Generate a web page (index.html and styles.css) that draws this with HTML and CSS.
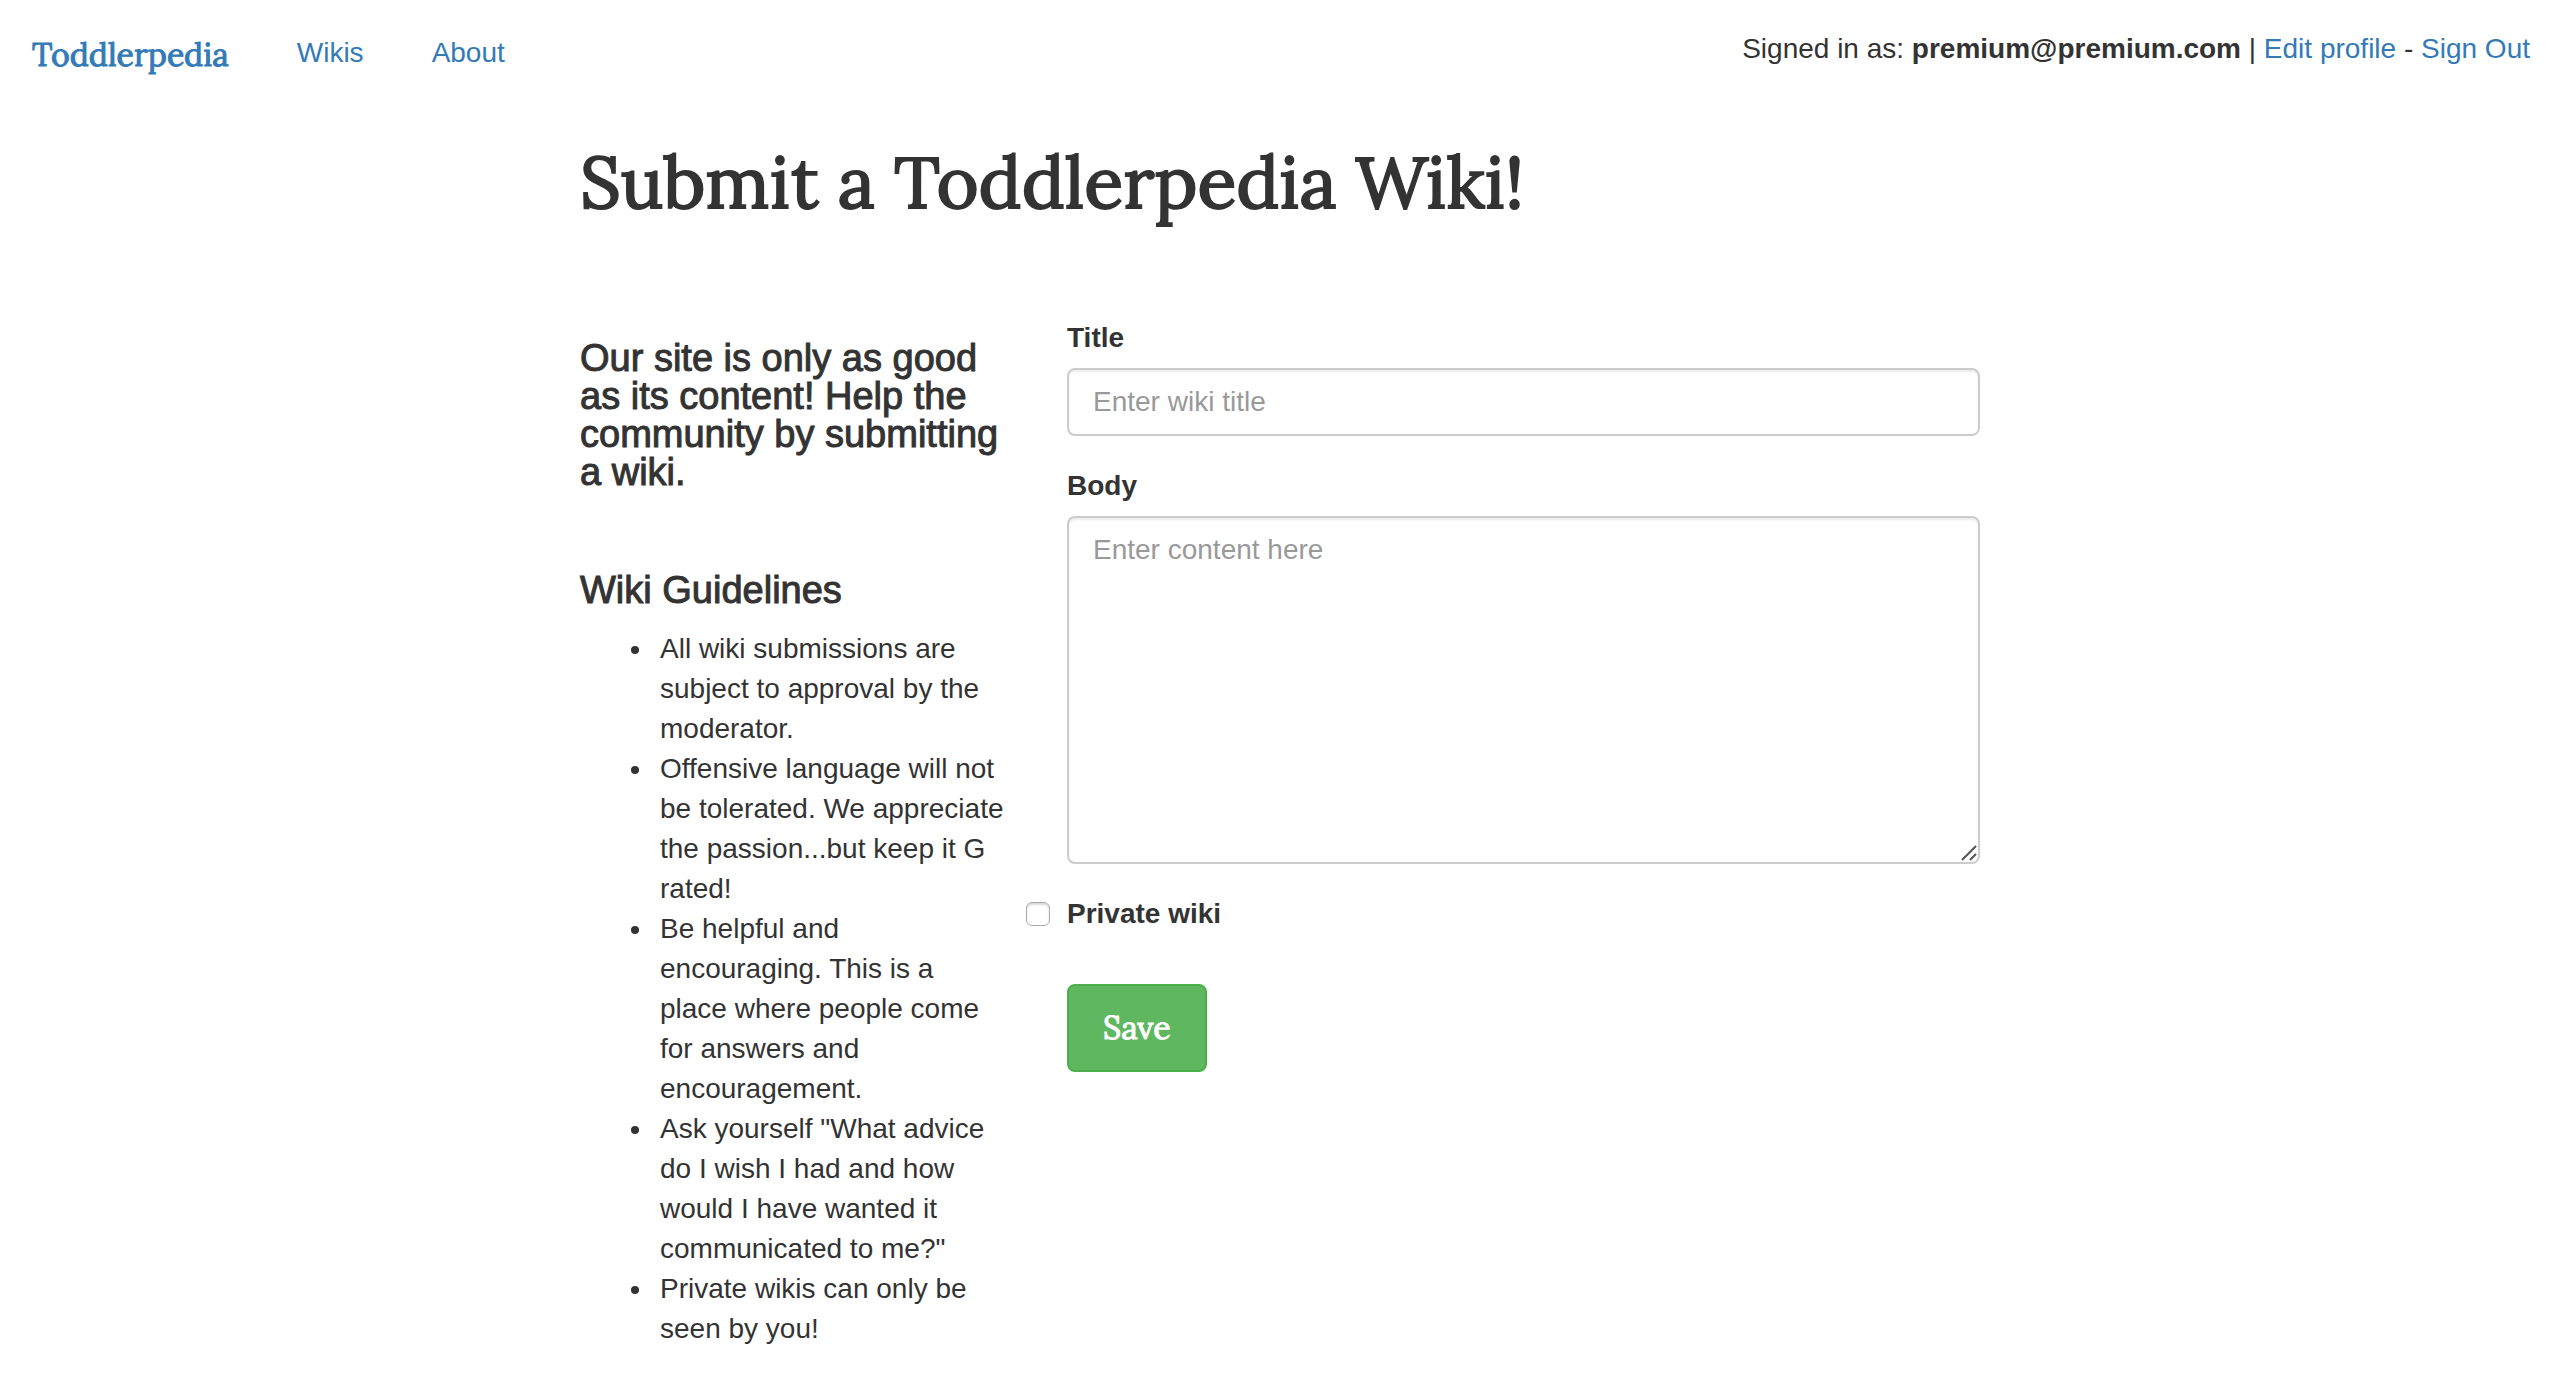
FILE: index.html
```html
<!DOCTYPE html>
<html lang="en">
<head>
  <meta charset="utf-8">
  <title>Toddlerpedia</title>
  <link rel="stylesheet" href="styles.css">
</head>
<body>
  <header class="topbar">
    <nav class="nav">
      <a class="brand" href="#">Toddlerpedia</a>
      <a href="#">Wikis</a>
      <a href="#">About</a>
    </nav>
    <div class="user-info">Signed in as: <strong>premium@premium.com</strong> | <a href="#">Edit profile</a> - <a href="#">Sign Out</a></div>
  </header>

  <main class="container">
    <h1>Submit a Toddlerpedia Wiki!</h1>
    <div class="row">
      <section class="guide">
        <h4 class="intro">Our site is only as good as its content! Help the community by submitting a wiki.</h4>
        <h4>Wiki Guidelines</h4>
        <ul>
          <li>All wiki submissions are subject to approval by the moderator.</li>
          <li>Offensive language will not be tolerated. We appreciate the passion...but keep it G rated!</li>
          <li>Be helpful and encouraging. This is a place where people come for answers and encouragement.</li>
          <li>Ask yourself "What advice do I wish I had and how would I have wanted it communicated to me?"</li>
          <li>Private wikis can only be seen by you!</li>
        </ul>
      </section>
      <form class="wiki-form">
        <div class="form-group">
          <label for="title">Title</label>
          <input class="form-control" type="text" id="title" placeholder="Enter wiki title">
        </div>
        <div class="form-group">
          <label for="body">Body</label>
          <textarea class="form-control" id="body" rows="8" placeholder="Enter content here"></textarea>
        </div>
        <div class="check-group">
          <input type="checkbox" id="private">
          <label for="private">Private wiki</label>
        </div>
        <button class="btn" type="submit">Save</button>
      </form>
    </div>
  </main>
</body>
</html>
```

FILE: styles.css
```css
* {
  box-sizing: border-box;
}

body {
  margin: 0;
  background: #fff;
  color: #333;
  font: 28px/40px "Helvetica Neue", "Liberation Sans", Arial, sans-serif;
}

a {
  color: #337ab7;
  text-decoration: none;
}

.topbar {
  display: flex;
  justify-content: space-between;
  align-items: flex-start;
  padding: 29px 30px 0 32px;
}

.nav {
  display: flex;
  align-items: flex-start;
  gap: 68px;
  line-height: 48px;
}

.brand,
h1,
.btn {
  font-family: Lora, "Liberation Serif", serif;
  font-weight: 400;
  -webkit-text-stroke: 1px;
}

.brand {
  padding-top: 2px;
  font-size: 32px;
}

.container {
  max-width: 1460px;
  margin: 0 auto;
  padding: 0 30px;
}

h1 {
  margin: 59px 0 92px;
  font-size: 72px;
  line-height: 88px;
  -webkit-text-stroke: 2px;
}

.row {
  display: grid;
  grid-template-columns: 427fr 913fr;
  gap: 60px;
}

h4 {
  margin: 0 0 20px;
  font-size: 38px;
  font-weight: 400;
  line-height: 38px;
  -webkit-text-stroke: 1px;
}

.guide {
  padding-top: 21px;
}

.intro {
  margin-bottom: 80px;
}

ul {
  margin: 0;
  padding-left: 74px;
}

li {
  padding-left: 6px;
}

.wiki-form label {
  font-weight: 700;
}

.form-group {
  display: flex;
  flex-direction: column;
  gap: 10px;
  margin-bottom: 30px;
}

.form-control {
  display: block;
  width: 100%;
  padding: 12px 24px;
  border: 2px solid #ccc;
  border-radius: 8px;
  background: #fff;
  box-shadow: inset 0 2px 2px rgba(0, 0, 0, 0.075);
  color: #555;
  font: inherit;
  resize: vertical;
}

input.form-control {
  height: 68px;
}

textarea.form-control {
  background: #fff url("data:image/svg+xml,%3Csvg xmlns='http://www.w3.org/2000/svg' width='18' height='18'%3E%3Cpath d='M2 16L16 2M10 16L16 10' stroke='%23555' stroke-width='2'/%3E%3C/svg%3E") no-repeat right bottom;
}

textarea::-webkit-resizer {
  background: transparent;
}

.form-control::placeholder {
  color: #999;
}

.check-group {
  display: flex;
  align-items: center;
  gap: 17px;
  margin: 0 0 50px -41px;
}

.check-group input {
  appearance: none;
  width: 24px;
  height: 24px;
  margin: 0;
  border: 1px solid #aaa;
  border-radius: 6px;
  background: #fff;
  box-shadow: inset 0 2px 2px rgba(0, 0, 0, 0.15);
}

.check-group input:checked {
  background: #337ab7;
}

.btn {
  padding: 20px 34px;
  border: 2px solid #4cae4c;
  border-radius: 8px;
  background: #5fb760;
  color: #fff;
  font-size: 32px;
  line-height: 44px;
}
```
